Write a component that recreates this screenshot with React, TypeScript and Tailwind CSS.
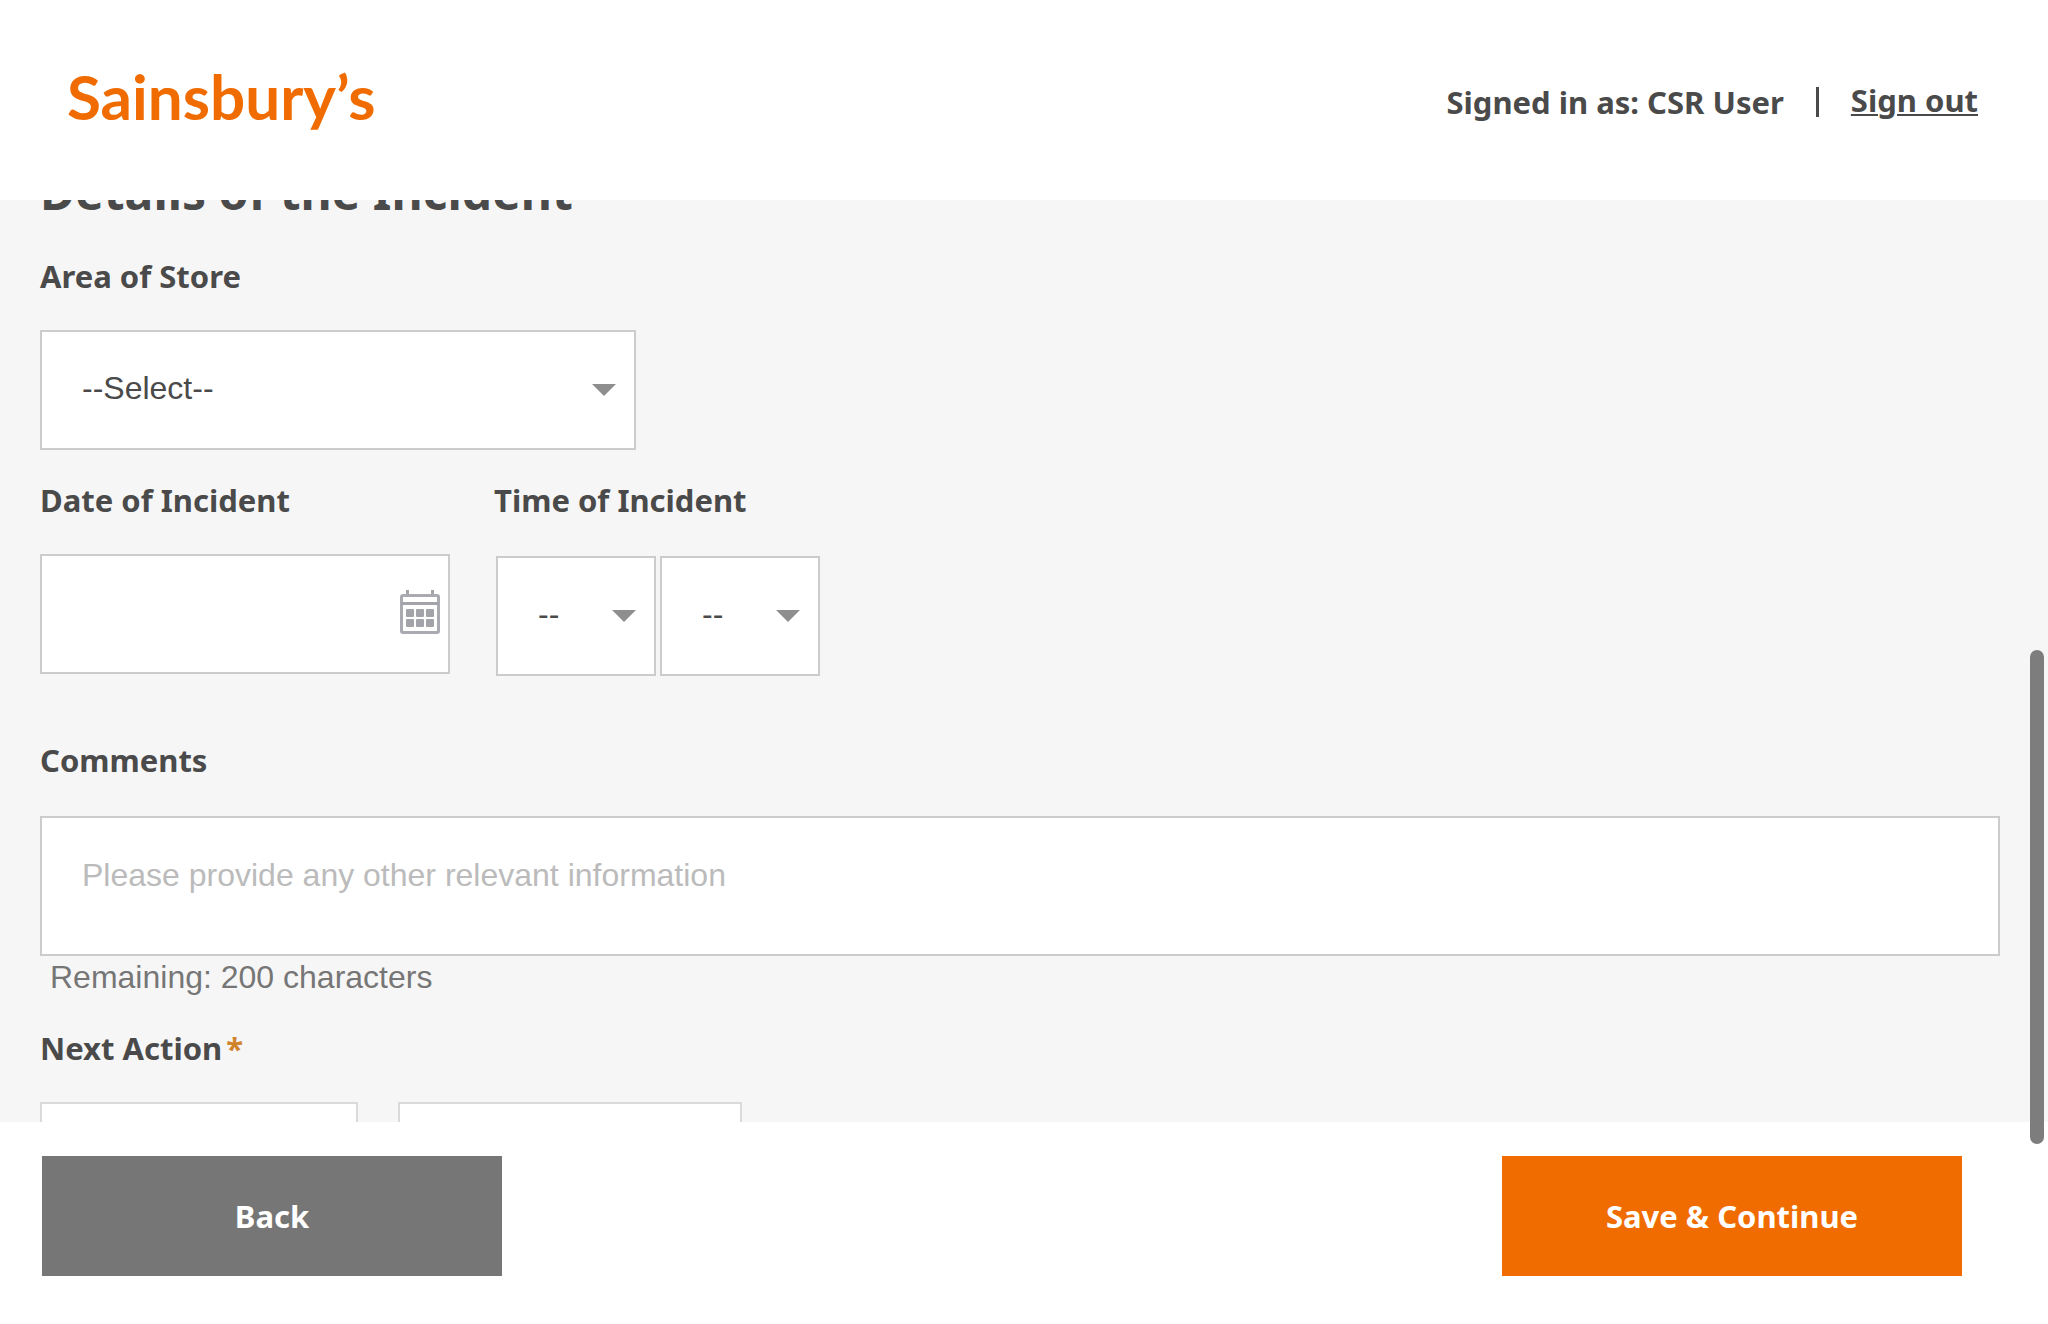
import React from "react";

const LABEL =
  "block font-['Noto_Sans',sans-serif] text-[31px] leading-[40px] font-bold text-[#4a4a4a]";
const CONTROL =
  "block h-[120px] w-full appearance-none rounded-none border-2 border-[#ccc] bg-white px-10 pb-1 text-[32px] text-[#4a4a4a] outline-none";

function Arrow() {
  return (
    <svg
      viewBox="0 0 24 12"
      aria-hidden="true"
      className="pointer-events-none absolute top-1/2 right-5 h-3 w-6 -translate-y-1/2 fill-[#8e8e8e]"
    >
      <path d="M0 0H24L12 12Z" />
    </svg>
  );
}

function CalendarIcon() {
  return (
    <svg viewBox="0 0 40 44" aria-hidden="true" className="h-11 w-10" fill="#a3a4aa">
      <path d="M6 0h3v5H6zM31 0h3v5h-3z" />
      <rect x="1.5" y="5.5" width="37" height="37" rx="1.5" fill="none" stroke="#a9abb0" strokeWidth="3" />
      <path d="M1.5 12h37v3h-37z" />
      {[19, 29].map((y) =>
        [6, 16, 26].map((x) => <rect key={`${x}-${y}`} x={x} y={y} width="8" height="8" rx="1" />),
      )}
    </svg>
  );
}

function Dropdown({ id, label, text }: { id: string; label?: string; text: string }) {
  return (
    <div className="relative">
      <select id={id} aria-label={label} className={CONTROL}>
        <option>{text}</option>
      </select>
      <Arrow />
    </div>
  );
}

export default function App() {
  return (
    <div className="relative flex h-screen flex-col bg-white font-['Liberation_Sans',Arial,sans-serif] text-[#4a4a4a]">
      <header className="flex h-[200px] shrink-0 items-center justify-between pr-[70px] pl-[67px]">
        <a
          href="#home"
          className="pb-2 font-['Lato','Open_Sans',sans-serif] text-[62px] leading-[72px] font-bold text-[#f06c00]"
        >
          Sainsbury’s
        </a>
        <div className="flex items-center gap-8 font-['Noto_Sans',sans-serif] text-[31px] leading-[40px] font-bold">
          <div className="flex items-center gap-8 pt-1">
            <span>Signed in as: CSR User</span>
            <span className="h-[30px] w-[3px] bg-[#4a4a4a]" />
          </div>
          <a href="#sign-out" className="underline decoration-2 underline-offset-2">
            Sign out
          </a>
        </div>
      </header>

      <main className="min-h-0 flex-1 overflow-hidden bg-[#f6f6f6] pr-12 pl-10">
        <h1 className="-mt-10 font-['Noto_Sans',sans-serif] text-[48px] leading-[64px] font-bold">
          Details of the Incident
        </h1>

        <div className="mt-8 w-[596px]">
          <label htmlFor="area" className={LABEL}>
            Area of Store
          </label>
          <div className="mt-[34px]">
            <Dropdown id="area" text="--Select--" />
          </div>
        </div>

        <div className="mt-[30px] flex gap-11">
          <div className="w-[410px]">
            <label htmlFor="date" className={LABEL}>
              Date of Incident
            </label>
            <div className="relative mt-[34px]">
              <input id="date" type="text" className={CONTROL} />
              <button type="button" aria-label="Open calendar" className="absolute top-9 right-[10px]">
                <CalendarIcon />
              </button>
            </div>
          </div>
          <div>
            <label htmlFor="hour" className={LABEL}>
              Time of Incident
            </label>
            <div className="mt-9 flex gap-1 pl-0.5">
              <div className="w-40">
                <Dropdown id="hour" text="--" />
              </div>
              <div className="w-40">
                <Dropdown id="minute" label="Minute of incident" text="--" />
              </div>
            </div>
          </div>
        </div>

        <label htmlFor="comments" className={`${LABEL} mt-16`}>
          Comments
        </label>
        <textarea
          id="comments"
          placeholder="Please provide any other relevant information"
          className="mt-9 block h-[140px] w-full resize-none rounded-none border-2 border-[#ccc] bg-white p-10 text-[32px] leading-[34px] outline-none placeholder:text-[#bbb]"
        />
        <p className="pl-[10px] text-[32px] leading-[42px] text-[#767676]">Remaining: 200 characters</p>

        <label htmlFor="next-action" className={`${LABEL} mt-[30px]`}>
          Next Action
          <span className="ml-1 text-[#d0832b]">*</span>
        </label>
        <div className="mt-[34px] flex gap-10">
          <input
            id="next-action"
            type="text"
            className="h-[120px] w-[318px] border-2 border-[#dadada] bg-white"
          />
          <input
            type="text"
            aria-label="Next action detail"
            className="h-[120px] w-[344px] border-2 border-[#dadada] bg-white"
          />
        </div>
      </main>

      <footer className="flex h-[202px] shrink-0 items-start justify-between pt-[34px] pr-[86px] pl-[42px] font-['Noto_Sans',sans-serif] text-[31px] leading-[40px] font-bold text-white">
        <button type="button" className="h-[120px] w-[460px] bg-[#767676]">
          Back
        </button>
        <button type="button" className="h-[120px] w-[460px] bg-[#f06c00]">
          Save &amp; Continue
        </button>
      </footer>

      <div className="absolute top-[650px] right-1 h-[494px] w-[14px] rounded-full bg-[#7d7d7d]" />
    </div>
  );
}
